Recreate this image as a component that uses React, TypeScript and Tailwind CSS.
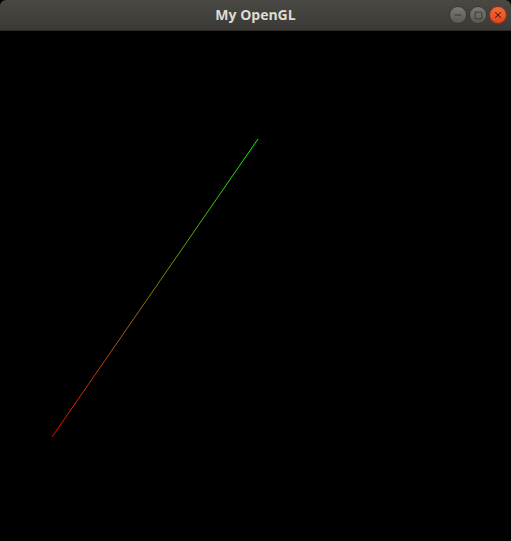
import { Minus, Square, X } from "lucide-react";

const App = () => {
  return (
    <div className="w-[511px] h-[541px] flex flex-col bg-black font-['Open_Sans',sans-serif]">
      <div className="h-[31px] rounded-t-[6px] bg-gradient-to-b from-[#4a4843] to-[#3b3a36] border-b border-[#2b2a27] relative flex items-center justify-center">
        <div className="text-[#dfdbd2] text-[14px] font-bold leading-none">My OpenGL</div>
        <div className="absolute right-[4px] top-[6px] flex items-center gap-[2px]">
          <div className="w-[18px] h-[18px] rounded-full bg-gradient-to-b from-[#7b7a75] to-[#5a5955] border border-[#3a3936] flex items-center justify-center">
            <Minus size={10} strokeWidth={2} color="#2e2d2a" />
          </div>
          <div className="w-[18px] h-[18px] rounded-full bg-gradient-to-b from-[#7b7a75] to-[#5a5955] border border-[#3a3936] flex items-center justify-center">
            <Square size={9} strokeWidth={2} color="#2e2d2a" />
          </div>
          <div className="w-[18px] h-[18px] rounded-full bg-gradient-to-b from-[#f26b3a] to-[#e1461a] border border-[#8a3216] flex items-center justify-center">
            <X size={10} strokeWidth={2.5} color="#4a1a08" />
          </div>
        </div>
      </div>
      <div className="flex-1 bg-black relative">
        <svg width="511" height="510" className="block">
          <defs>
            <linearGradient id="lg" gradientUnits="userSpaceOnUse" x1="52" y1="406" x2="258" y2="108">
              <stop offset="0" stopColor="#ff0000" />
              <stop offset="1" stopColor="#00ff00" />
            </linearGradient>
          </defs>
          <line x1="52" y1="406" x2="258" y2="108" stroke="url(#lg)" strokeWidth="1" />
        </svg>
      </div>
    </div>
  );
};

export default App;
